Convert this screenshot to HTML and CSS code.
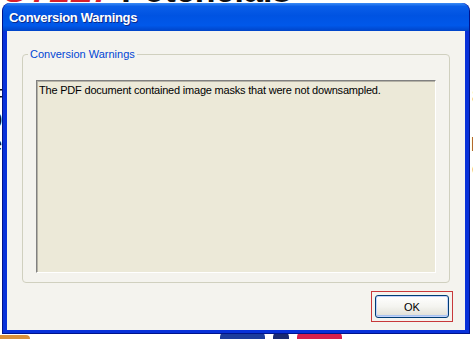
FILE: index.html
```html
<!DOCTYPE html>
<html lang="en">
<head>
  <meta charset="UTF-8" />
  <title>Conversion Warnings</title>
  <link rel="stylesheet" href="styles.css">
</head>
<body>
  <!-- pagina por detras del dialogo -->
  <div class="page">
    <h1 class="page-title"><span class="brand">SYLE7</span> Potenciais</h1>
    <div class="page-row"><span>F</span><span>8</span></div>
    <div class="page-row"><span>0</span><span></span></div>
    <div class="page-row"><span>e</span><span>F</span></div>
    <div class="page-row"><span></span><span>e</span></div>
    <div class="page-logo">
      <span class="logo-blue"></span>
      <span class="logo-navy"></span>
      <span class="logo-red"></span>
    </div>
    <span class="page-corner"></span>
  </div>

  <div class="window">
    <div class="titlebar">
      <span class="title">Conversion Warnings</span>
    </div>
    <div class="window-body">
      <fieldset class="group">
        <legend>Conversion Warnings</legend>
        <div class="message-box">
          The PDF document contained image masks that were not downsampled.
        </div>
      </fieldset>
      <div class="actions">
        <div class="highlight">
          <button class="btn">OK</button>
        </div>
      </div>
    </div>
  </div>
</body>
</html>
```

FILE: styles.css
```css
* {
  margin: 0;
  padding: 0;
  box-sizing: border-box;
}

body {
  background: #fff;
  width: 473px;
  height: 339px;
  overflow: hidden;
  position: relative;
  font-family: 'Liberation Sans', Arial, sans-serif;
}

/* pagina de fondo */
.page {
  display: flow-root;
  height: 339px;
  position: relative;
}

.page-title {
  font-size: 34px;
  font-weight: bold;
  line-height: 34px;
  margin-top: -27px;
  padding-left: 4px;
  color: #111;
  white-space: nowrap;
}

.page-title .brand {
  color: #d8202c;
  font-style: italic;
}

.page-row {
  display: flex;
  justify-content: space-between;
  font-size: 20px;
  line-height: 24px;
  color: #111;
  margin: 0 -10px 0 -9px;
}

.page-row:nth-child(2) { margin-top: 77px; }

.page-logo {
  position: absolute;
  left: 220px;
  bottom: -6px;
  display: flex;
  gap: 8px;
}

.page-logo span {
  display: block;
  width: 45px;
  height: 14px;
  border-radius: 6px;
}

.logo-blue { background: #1c3c9c; }
.logo-navy { background: #1a2a70; width: 16px !important; }
.logo-red { background: #d8204c; }

.page-corner {
  position: absolute;
  left: 0;
  bottom: 0;
  width: 30px;
  height: 4px;
  background: #d9903a;
  border-radius: 0 4px 0 0;
}

/* ventana estilo XP */
.window {
  position: absolute;
  left: 2px;
  top: 3px;
  width: 468px;
  height: 331px;
  background: #0831d9;
  border-radius: 8px 8px 0 0;
  padding: 0 4px 3px 4px;
  display: flex;
  flex-direction: column;
  border: 1px solid #00138c;
  border-top: none;
}

.titlebar {
  height: 28px;
  margin: 0 -4px 0 -4px;
  border-radius: 8px 8px 0 0;
  background: linear-gradient(180deg, #3b8cf5 0%, #0a5ee8 12%, #0053e2 45%, #0058ea 80%, #0044c8 100%);
  display: flex;
  align-items: center;
  padding-left: 6px;
}

.title {
  color: #fff;
  font-weight: bold;
  font-size: 13px;
  text-shadow: 1px 1px 0 #0b2a8a;
  letter-spacing: -0.3px;
}

.window-body {
  flex: 1;
  background: #f4f3ee;
  padding: 17px 12px 0 15px;
  display: flex;
  flex-direction: column;
}

.group {
  border: 1px solid #d0d0bf;
  border-radius: 4px;
  height: 235px;
  margin-right: 3px;
  padding: 19px 13px 10px 13px;
}

.group legend {
  color: #0046d5;
  font-size: 11px;
  line-height: 13px;
  padding: 0 2px;
  margin-left: -8px;
}

.message-box {
  height: 193px;
  background: #ece9d8;
  border-top: 1px solid #808080;
  border-left: 1px solid #808080;
  border-bottom: 1px solid #fff;
  border-right: 1px solid #fff;
  box-shadow: inset 1px 1px 0 #b5b2a6;
  font-size: 11px;
  letter-spacing: -0.2px;
  color: #000;
  padding: 3px 2px;
  line-height: 13px;
}

.actions {
  display: flex;
  justify-content: flex-end;
  margin-top: 8px;
}

.highlight {
  border: 1px solid #c8383a;
  padding: 3px;
  width: 82px;
  height: 31px;
}

.btn {
  width: 100%;
  height: 100%;
  border: 1px solid #003c74;
  border-radius: 3px;
  background: linear-gradient(180deg, #ffffff 0%, #f4f4f0 50%, #e3e2da 90%, #d6d0c5 100%);
  box-shadow: inset 0 0 0 1px #c1d3fb, inset 0 -1px 0 1px #a8c2f0;
  font-family: 'Liberation Sans', Arial, sans-serif;
  font-size: 11px;
  color: #000;
}
```
